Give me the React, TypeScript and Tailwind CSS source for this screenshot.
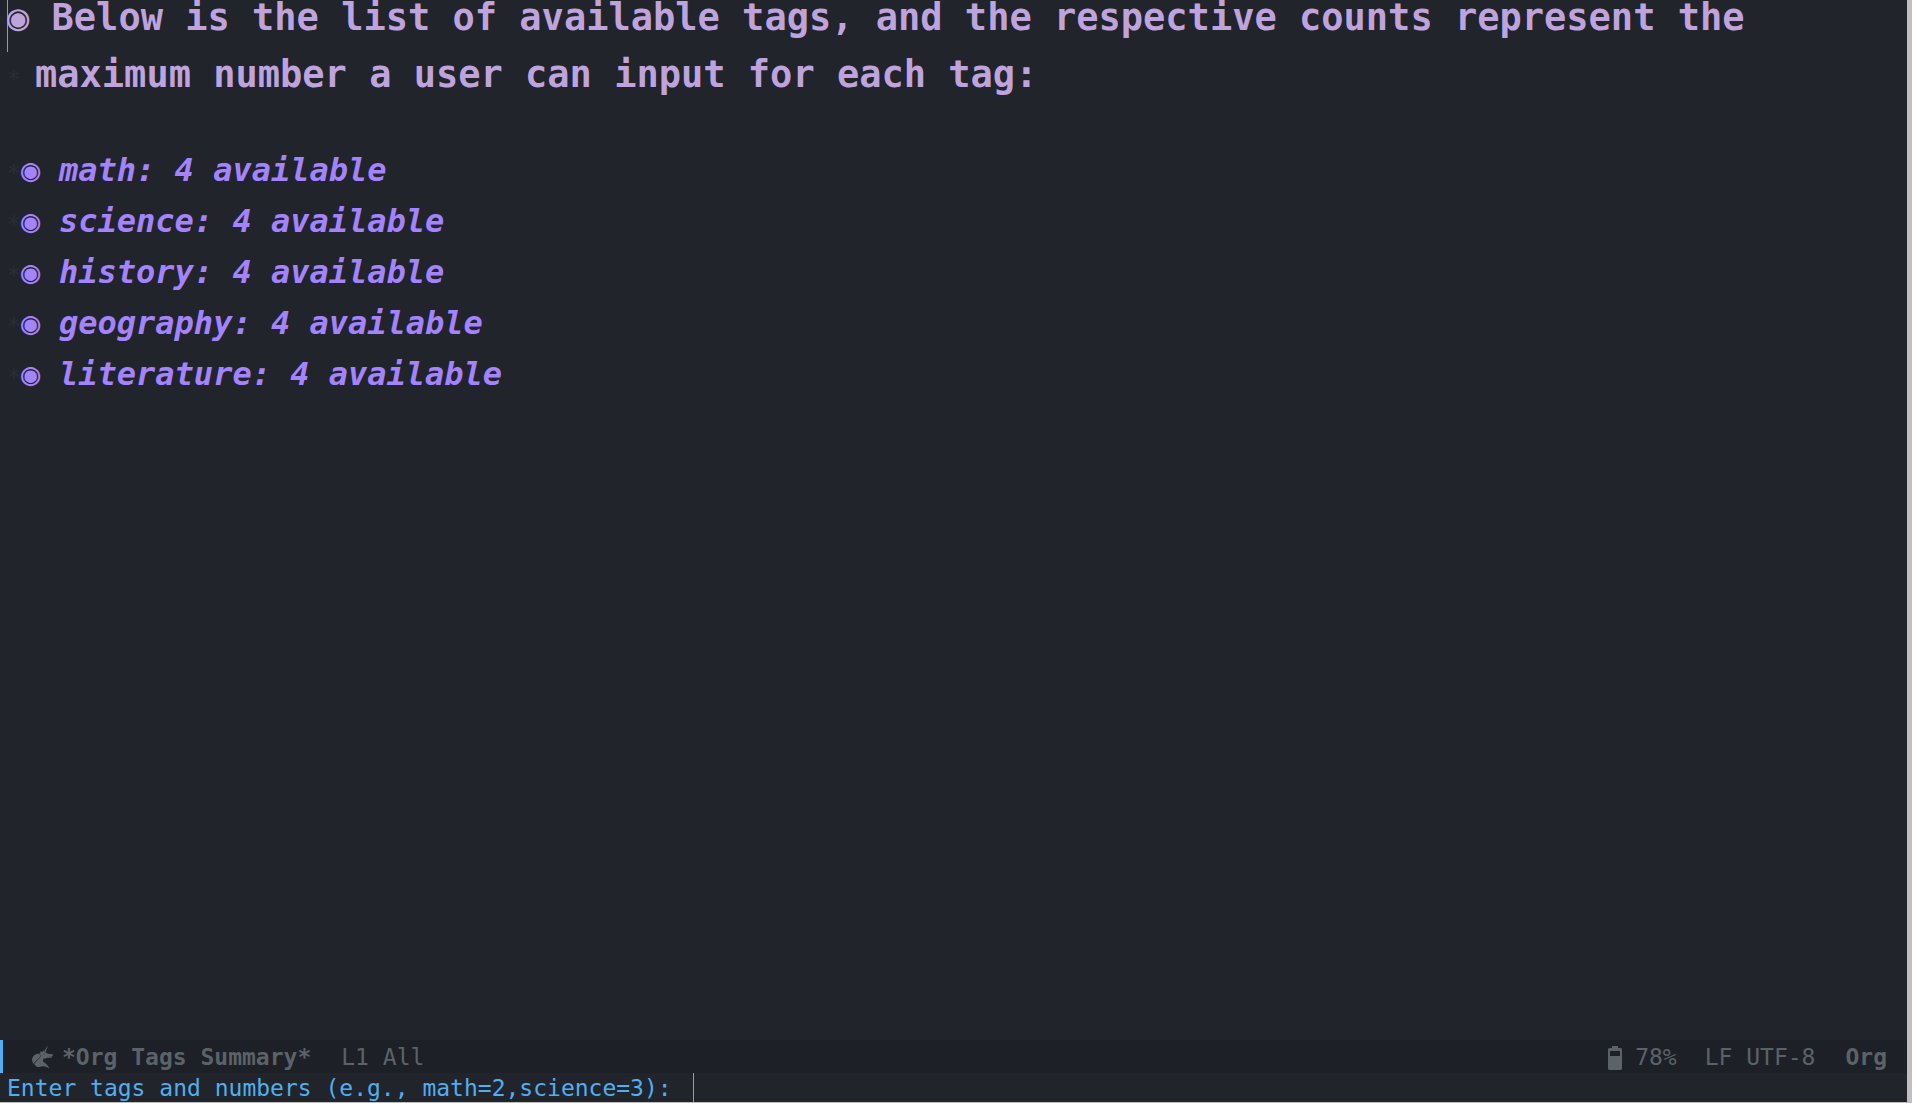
import { SiOrg } from "react-icons/si";

const tags = [
  { name: "math", count: 4 },
  { name: "science", count: 4 },
  { name: "history", count: 4 },
  { name: "geography", count: 4 },
  { name: "literature", count: 4 },
];

function Star() {
  return <span className="w-[14px] shrink-0 text-[23px] font-normal not-italic text-[#2b2e36]">*</span>;
}

function BatteryIcon() {
  return (
    <svg viewBox="0 0 16 26" className="h-[26px] w-[16px]" fill="currentColor" aria-hidden="true">
      <path
        fillRule="evenodd"
        d="M5 1h6v2h2.500q1.500 0 1.500 1.500v19q0 1.500-1.500 1.500h-11q-1.500 0-1.500-1.500v-19q0-1.500 1.500-1.500h2.500zM3 6v5h10v-5z"
      />
    </svg>
  );
}

export default function App() {
  return (
    <div className="flex h-screen flex-col border-b border-r-[5px] border-b-[#c0bfbd] border-r-[#c0bfbd] bg-[#21242b] font-['DejaVu_Sans_Mono',monospace] text-[23px]">
      <main className="min-h-0 flex-1 pl-[7px]">
        <h1 className="text-[37px] font-bold whitespace-pre text-[#bfa3dc]">
          <span className="mb-[11px] flex leading-[35px]">
            <span className="-mb-[17px] border-l border-[#51afef]" />
            <span className="-ml-px">◉ Below is the list of available tags, and the respective counts represent the</span>
          </span>
          <span className="flex items-baseline leading-[57px]">
            <Star />
            <span className="pl-[14px]">maximum number a user can input for each tag:</span>
          </span>
        </h1>
        <ul className="mt-[37px] text-[32px] leading-[51px] font-bold whitespace-pre text-[#a483ff] italic">
          {tags.map((tag) => (
            <li key={tag.name} className="flex h-[51px] items-baseline">
              <Star />
              <span className="w-[38px] not-italic">◉</span>
              <span>
                {tag.name}: {tag.count} available
              </span>
            </li>
          ))}
        </ul>
      </main>
      <footer>
        <div className="flex h-[33px] items-center border-l-[3px] border-[#51afef] bg-[#1d2026] pt-[2px] pr-[20px] whitespace-pre text-[#5b6268]">
          <SiOrg className="ml-[28px] h-[23px] w-[23px]" aria-hidden="true" />
          <span className="ml-[8px] font-bold">*Org Tags Summary*</span>
          <span className="ml-[30px]">L1 All</span>
          <span className="ml-auto flex items-center gap-[12px]">
            <BatteryIcon />
            78%
          </span>
          <span className="ml-[28px]">LF UTF-8</span>
          <span className="ml-[30px] font-bold">Org</span>
        </div>
        <div className="flex h-[29px] items-center pl-[7px] text-[#51afef]">
          <label htmlFor="tag-input" className="min-w-[686px] pt-[2px] whitespace-pre">
            {"Enter tags and numbers (e.g., math=2,science=3): "}
          </label>
          <input id="tag-input" type="text" className="h-full min-w-0 flex-1 border-l border-[#51afef] bg-transparent outline-none" />
        </div>
      </footer>
    </div>
  );
}
